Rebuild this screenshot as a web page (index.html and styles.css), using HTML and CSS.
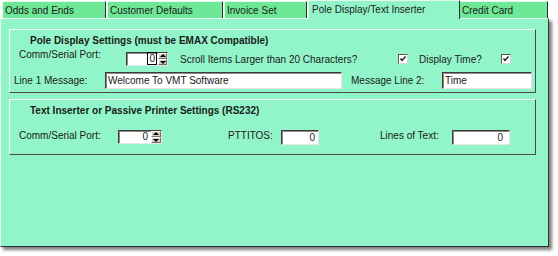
FILE: index.html
```html
<!DOCTYPE html>
<html>
<head>
<meta charset="utf-8">
<link rel="stylesheet" href="styles.css">
</head>
<body>
<div class="frame">
  <div class="tabs">
    <div class="tab t1">Odds and Ends</div>
    <div class="tab t2">Customer Defaults</div>
    <div class="tab t3">Invoice Set</div>
    <div class="tab active">Pole Display/Text Inserter</div>
    <div class="tab t5">Credit Card</div>
  </div>
  <div class="panel">
    <div class="group g1">
      <div class="gtitle">Pole Display Settings (must be EMAX Compatible)</div>
      <div class="row r1">
        <span class="lbl l-port1">Comm/Serial Port:</span>
        <div class="spin s1"><span class="val"><span class="focus">0</span></span><span class="btns"><span class="up"></span><span class="dn"></span></span></div>
        <span class="lbl l-scroll">Scroll Items Larger than 20 Characters?</span>
        <span class="chk"><svg width="10" height="10" viewBox="0 0 10 10"><path d="M2.5 4.5 L4 6.5 L7.5 2.5" fill="none" stroke="#1a1a1a" stroke-width="1.4"/></svg></span>
        <span class="lbl l-time">Display Time?</span>
        <span class="chk"><svg width="10" height="10" viewBox="0 0 10 10"><path d="M2.5 4.5 L4 6.5 L7.5 2.5" fill="none" stroke="#1a1a1a" stroke-width="1.4"/></svg></span>
      </div>
      <div class="row r2">
        <span class="lbl l-line1">Line 1 Message:</span>
        <div class="inp i-line1">Welcome To VMT Software</div>
        <span class="lbl l-line2">Message Line 2:</span>
        <div class="inp i-line2">Time</div>
      </div>
    </div>
    <div class="group g2">
      <div class="gtitle">Text Inserter or Passive Printer Settings (RS232)</div>
      <div class="row r3">
        <span class="lbl l-port2">Comm/Serial Port:</span>
        <div class="spin s2"><span class="val">0</span><span class="btns"><span class="up"></span><span class="dn"></span></span></div>
        <span class="lbl l-pt">PTTITOS:</span>
        <div class="inp num i-pt">0</div>
        <span class="lbl l-lines">Lines of Text:</span>
        <div class="inp num i-lines">0</div>
      </div>
    </div>
  </div>
</div>
</body>
</html>
```

FILE: styles.css
```css
html, body {
  margin: 0;
  padding: 0;
  background: #ffffff;
}
body {
  font-family: "Liberation Sans", Arial, sans-serif;
  font-size: 10px;
  color: #1a1a1a;
  width: 558px;
  height: 256px;
  overflow: hidden;
}
.frame {
  width: 549px;
}
.tabs {
  display: flex;
  align-items: flex-start;
  height: 18px;
}
.tab {
  box-sizing: border-box;
  height: 17px;
  margin-top: 1px;
  margin-left: 1px;
  background: #6ee897;
  border-top: 1px solid #e4fbe9;
  border-left: 1px solid #e4fbe9;
  border-right: 1px solid #2c2c2c;
  padding: 2px 0 0 2px;
  line-height: 14px;
  white-space: nowrap;
  overflow: hidden;
}
.t1 { margin-left: 2px; width: 104px; }
.t2 { width: 116px; }
.t3 { width: 83px; }
.tab.active {
  width: 152px;
  height: 19px;
  margin-top: 0;
  padding: 1px 0 0 3px;
  line-height: 15px;
  background: #92f5c9;
  position: relative;
  z-index: 1;
}
.t5 {
  width: 88px;
  margin-left: 0;
  border-left: none;
  padding-left: 2px;
}
.panel {
  box-sizing: border-box;
  width: 549px;
  height: 229px;
  background: #92f5c9;
  border-top: 1px solid #e8fcef;
  border-left: 1px solid #e8fcef;
  border-right: 1px solid #303030;
  border-bottom: 1px solid #303030;
  box-shadow: 3px 3px 3px rgba(0, 0, 0, 0.5);
  padding: 10px 0 0 8px;
}
.group {
  box-sizing: border-box;
  width: 527px;
  border-top: 1px solid #effff5;
  border-left: 1px solid #effff5;
  border-right: 1px solid #4a4a4a;
  border-bottom: 1px solid #4a4a4a;
  padding-top: 5px;
}
.g1 { padding-bottom: 3px; }
.g2 { margin-top: 6px; padding-bottom: 9px; }
.gtitle {
  font-weight: bold;
  line-height: 12px;
  margin-left: 20px;
  white-space: nowrap;
}
.row {
  display: flex;
  align-items: flex-start;
}
.r1 { margin-top: 5px; height: 14px; }
.r2 { margin-top: 6px; align-items: center; }
.r3 { margin-top: 13px; }
.lbl {
  display: block;
  line-height: 12px;
  white-space: nowrap;
  flex: none;
}
.l-port1 { margin-left: 9px; width: 107px; margin-top: -3px; }
.l-scroll { margin-left: 12px; width: 218px; margin-top: 2px; }
.l-time { margin-left: 11px; width: 82px; margin-top: 2px; }
.l-line1 { margin-left: 4px; width: 91px; }
.l-line2 { margin-left: 9px; width: 91px; }
.l-port2 { margin-left: 9px; width: 99px; }
.l-pt { margin-left: 66px; width: 53px; }
.l-lines { margin-left: 61px; width: 72px; }

.chk {
  display: block;
  flex: none;
  box-sizing: border-box;
  width: 10px;
  height: 10px;
  margin-top: 2px;
  background: #ffffff;
  border-top: 1px solid #555;
  border-left: 1px solid #555;
  border-right: 1px solid #d8d8d8;
  border-bottom: 1px solid #d8d8d8;
  position: relative;
}
.chk svg {
  display: block;
  margin: -1px 0 0 -1px;
}

.inp {
  box-sizing: border-box;
  flex: none;
  background: #ffffff;
  border-top: 1px solid #3c3c3c;
  border-left: 1px solid #3c3c3c;
  border-right: 1px solid #e6e6e6;
  border-bottom: 1px solid #e6e6e6;
  box-shadow: inset 1px 1px 0 #8a8a8a;
  padding-left: 2px;
  white-space: nowrap;
  overflow: hidden;
}
.i-line1 { width: 237px; height: 17px; line-height: 15px; }
.i-line2 { width: 90px; height: 17px; line-height: 15px; }
.num { text-align: right; height: 15px; line-height: 13px; }
.i-pt { width: 38px; padding-right: 3px; }
.i-lines { width: 58px; padding-right: 6px; }

.spin {
  box-sizing: border-box;
  flex: none;
  display: flex;
  background: #ffffff;
  border-top: 1px solid #3c3c3c;
  border-left: 1px solid #3c3c3c;
  border-right: 1px solid #e6e6e6;
  border-bottom: 1px solid #e6e6e6;
  box-shadow: inset 1px 1px 0 #8a8a8a;
  height: 14px;
}
.s1 { width: 42px; }
.s2 { width: 44px; }
.spin .val {
  flex: 1;
  text-align: right;
  line-height: 12px;
  padding-right: 2px;
}
.s2 .val { padding-right: 3px; }
.focus {
  outline: 1px solid #000;
  outline-offset: 0;
  padding: 0 1px;
}
.btns {
  display: flex;
  flex-direction: column;
  width: 9px;
  background: #d4d0c8;
}
.s2 .btns { width: 10px; }
.btns .up, .btns .dn {
  flex: 1;
  box-sizing: border-box;
  border-top: 1px solid #ffffff;
  border-left: 1px solid #ffffff;
  border-right: 1px solid #707070;
  border-bottom: 1px solid #707070;
  position: relative;
}
.btns .up::after, .btns .dn::after {
  content: "";
  position: absolute;
  left: 50%;
  top: 50%;
  margin-left: -3px;
  border-left: 3px solid transparent;
  border-right: 3px solid transparent;
}
.btns .up::after {
  margin-top: -2px;
  border-bottom: 3px solid #000;
}
.btns .dn::after {
  margin-top: -1px;
  border-top: 3px solid #000;
}
```
